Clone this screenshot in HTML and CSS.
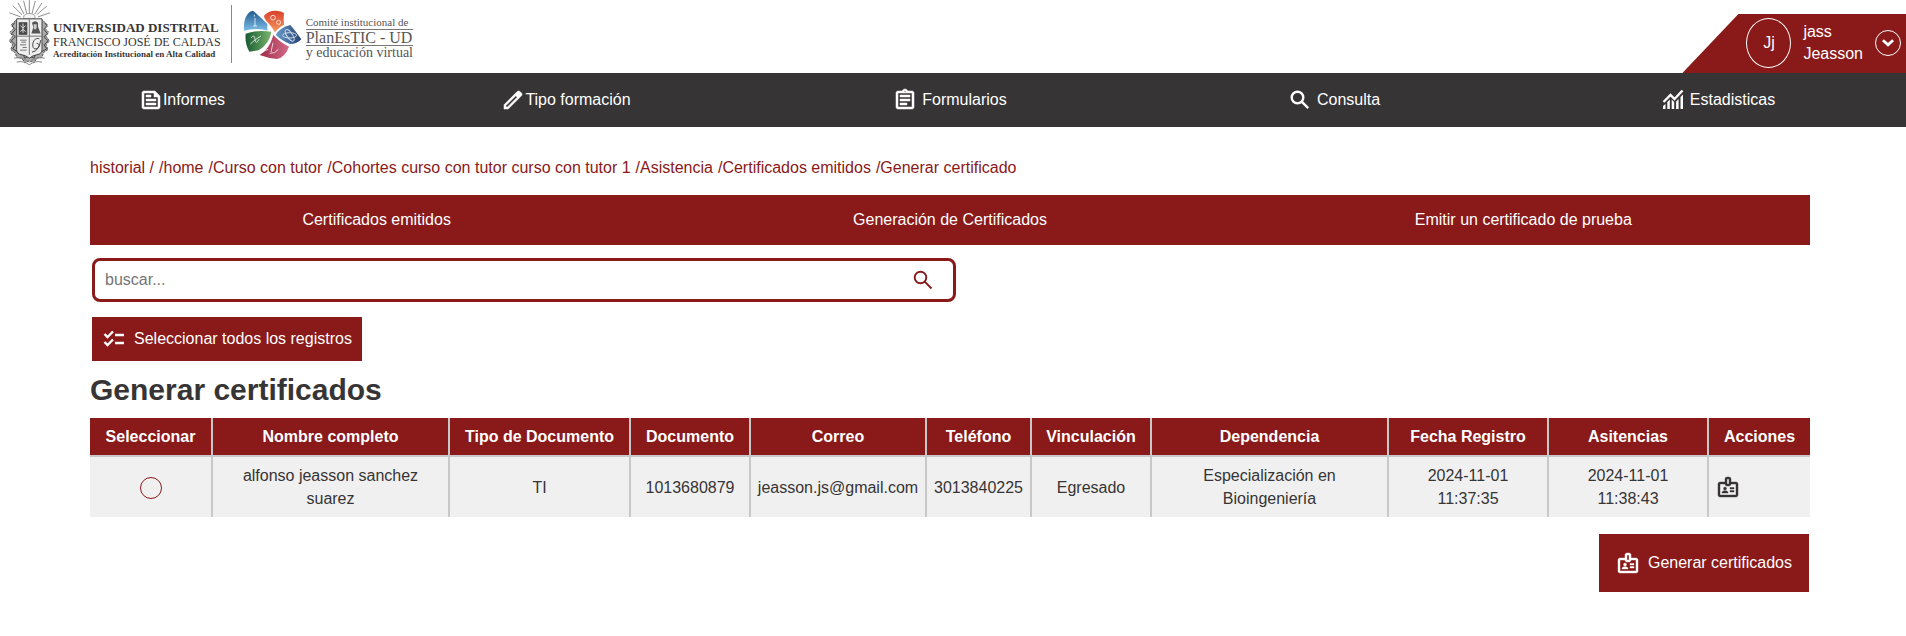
FILE: index.html
```html
<!DOCTYPE html>
<html lang="es">
<head>
<meta charset="utf-8">
<title>Generar certificados</title>
<link rel="stylesheet" href="styles.css">
</head>
<body>
<svg class="sprite" aria-hidden="true">
  <symbol id="badge" viewBox="0 0 24 24"><path fill-rule="evenodd" stroke="currentColor" stroke-width=".4" d="M20 7h-5V4c0-1.100-.9-2-2-2h-2c-1.100 0-2 .9-2 2v3H4c-1.100 0-2 .9-2 2v11c0 1.100.9 2 2 2h16c1.100 0 2-.9 2-2V9c0-1.100-.9-2-2-2zM11 4h2v5h-2V4zm9 16H4V9h5c0 1.100.9 2 2 2h2c1.100 0 2-.9 2-2h5v11zM9 15a1.500 1.500 0 1 0 0-3 1.500 1.500 0 0 0 0 3zm2.080 1.180C10.440 15.900 9.740 15.750 9 15.750s-1.440.15-2.080.43c-.56.24-.92.78-.92 1.390V18h6v-.43c0-.61-.36-1.150-.92-1.390zM14 12.500h4V14h-4zM14 15.500h4V17h-4z"/></symbol>
</svg>

<header class="top">
  <div class="brand">
    <svg class="crest" viewBox="24 0 132 200" aria-hidden="true">
      <g stroke="#555" stroke-width="2" fill="none">
        <path d="M88 40V0M80 40 71 2M72 42 54 8M66 44 38 16M62 50 28 38M96 40l10-38M104 42l22-34M110 44l30-26M114 50l36-12"/>
      </g>
      <path d="M72 56c-4-10 4-16 16-16s20 6 16 16z" fill="#f4f4f4" stroke="#777" stroke-width="2"/>
      <path d="M46 62 34 74l8 10-12 12 8 12-10 14 10 12-6 14 14 10 4 14 16 2 8 14 14-6 14 6 8-14 16-2 4-14 14-10-6-14 10-12-10-14 8-12-12-12 8-10-14-14z" fill="#aaa" stroke="#555" stroke-width="3" stroke-dasharray="7 3"/>
      <path d="M44 68l-8 10 10 10-10 12 10 10-12 12 12 12-8 12 14 8M134 68l8 10-10 10 10 12-10 10 12 12-12 12 8 12-14 8M58 160l12 4 4 10 14-6 14 6 4-10 12-4" fill="none" stroke="#444" stroke-width="3"/>
      <path d="M50 56h76v92q0 14-16 16-12 2-22 10-10-8-22-10-16-2-16-16z" fill="#eee" stroke="#444" stroke-width="3"/>
      <path d="M88 56v108M50 108h76" stroke="#777" stroke-width="3"/>
      <path d="M56 66h26v38H56z" fill="#4a4a4a"/>
      <path d="M69 70v28M61 76l8 8 8-8M61 94l8-6 8 6" fill="none" stroke="#ddd" stroke-width="3"/>
      <path d="M96 68q10-10 18 0v12l8 20H94l6-18z" fill="#555"/>
      <path d="M101 72h9v12l-5 5-4-5z" fill="#ccc"/>
      <path d="M60 120h20M64 126h14M60 134h18M68 142h12M60 150h20" stroke="#777" stroke-width="3"/>
      <path d="M118 116c-22-8-26 34-10 30 12-2 12-18 2-16M96 156q22-4 26-36" fill="none" stroke="#444" stroke-width="3"/>
      <path d="M42 174q22-6 46 12 24-18 46-12M50 186q20-6 38 8 18-14 38-8" fill="none" stroke="#888" stroke-width="3"/>
    </svg>
    <div class="university">
      <span class="uni-name">UNIVERSIDAD DISTRITAL</span>
      <span class="uni-sub">FRANCISCO JOSÉ DE CALDAS</span>
      <span class="uni-note">Acreditación Institucional en Alta Calidad</span>
    </div>
    <svg class="petals" viewBox="36 36 180 156" aria-hidden="true">
      <defs>
        <linearGradient id="pb" x2="0" y2="1"><stop stop-color="#20588f"/><stop offset="1" stop-color="#7bbde6"/></linearGradient>
        <linearGradient id="po" x2="0" y2="1"><stop stop-color="#d9402b"/><stop offset="1" stop-color="#f39a60"/></linearGradient>
        <linearGradient id="pn"><stop stop-color="#66a0cc"/><stop offset="1" stop-color="#263f77"/></linearGradient>
        <linearGradient id="pm"><stop stop-color="#9e2b49"/><stop offset="1" stop-color="#d36c88"/></linearGradient>
        <linearGradient id="pg" x2="1" y2="0"><stop stop-color="#195b32"/><stop offset="1" stop-color="#79b66c"/></linearGradient>
      </defs>
      <path fill="url(#pb)" d="M39 98C37 72 44 42 66 38q16 14 43 40v20Q82 88 39 98z"/>
      <path fill="url(#po)" d="M112 76Q96 60 100 52q12-14 32-14 20 0 27 8-2 16 0 34-14 6-27 23-8-16-20-27z"/>
      <path fill="url(#pn)" d="M134 111q12-22 44-30 14 16 33 43-12 14-34 14-22-8-43-27z"/>
      <path fill="url(#pm)" d="M127 111q20 22 47 35-12 32-36 37-26-2-52-12 30-18 41-60z"/>
      <path fill="url(#pg)" d="M44 107q34-12 77-6-4 34-38 56l-28 4q-14-24-11-54z"/>
      <g fill="none" stroke="#fff" stroke-width="3" opacity=".75">
        <circle cx="126" cy="59" r="7"/><circle cx="143" cy="73" r="6"/>
        <path d="M70 50v6M72 60v24M66 84h12M60 120q10-14 12 4t12 0M58 138q14-14 32-24"/>
        <ellipse cx="176" cy="112" rx="21" ry="8"/><ellipse cx="176" cy="112" rx="8" ry="20" transform="rotate(-35 176 112)"/>
        <path d="M96 160l16-6M126 134l-6 28M116 166q16 2 26-12"/>
      </g>
    </svg>
    <div class="committee">
      <span class="com-small">Comité institucional de</span>
      <span class="com-main">PlanEsTIC - UD</span>
      <span class="com-last">y educación virtual</span>
    </div>
  </div>
  <div class="user">
    <span class="avatar">Jj</span>
    <span class="user-name">jass<br>Jeasson</span>
    <button class="user-toggle" type="button" aria-label="Menú de usuario">
      <svg viewBox="0 0 26 26"><path d="M7.500 10l5.500 5 5.500-5" fill="none" stroke="#fff" stroke-width="3"/></svg>
    </button>
  </div>
</header>

<nav class="nav">
  <a class="nav-item" href="#"><svg class="icon" viewBox="0 0 24 24"><path fill-rule="evenodd" stroke="#fff" stroke-width=".5" d="M16 3H5c-1.100 0-2 .9-2 2v14c0 1.100.9 2 2 2h14c1.100 0 2-.9 2-2V8l-5-5zm3 16H5V5h10v4h4v10zM7 15h10v2H7zM7 7h5v2H7zM7 11h10v2H7z"/></svg>Informes</a>
  <a class="nav-item" href="#"><svg class="icon" viewBox="0 0 24 24"><path d="M3 21v-4.250L16.200 3.575q.3-.275.663-.425T17.625 3t.775.150.65.450L20.425 5q.3.275.438.650T21 6.400q0 .4-.137.763t-.438.662L7.250 21zM5 19h1.400l9.825-9.800-.7-.725-.725-.7L5 17.600z" fill-rule="evenodd" stroke="#fff" stroke-width=".5"/></svg>Tipo formación</a>
  <a class="nav-item spaced" href="#"><svg class="icon" viewBox="0 0 24 24"><path fill-rule="evenodd" stroke="#fff" stroke-width=".5" d="M7 15h7v2H7zM7 11h10v2H7zM7 7h10v2H7zM19 3h-4.180C14.400 1.840 13.300 1 12 1s-2.400.84-2.820 2H5c-1.100 0-2 .9-2 2v14c0 1.100.9 2 2 2h14c1.100 0 2-.9 2-2V5c0-1.100-.9-2-2-2zm-7-.25a.75.75 0 1 1 0 1.500.75.75 0 0 1 0-1.500zM19 19H5V5h14v14z"/></svg>Formularios</a>
  <a class="nav-item spaced" href="#"><svg class="icon" viewBox="0 0 24 24"><path fill="none" stroke="#fff" stroke-width="2.400" d="M15.300 9.500a5.800 5.800 0 1 1-11.600 0 5.800 5.800 0 0 1 11.600 0zM13.700 13.700l6.500 6.500"/></svg>Consulta</a>
  <a class="nav-item spaced" href="#"><svg class="icon" viewBox="0 0 24 24"><path fill="none" stroke="#fff" stroke-width="2.400" d="M2.500 14l7-7 4 4 8-8.500"/><path d="M2 18l2.500-2V21H2zM6.300 14l2.500-2.500V21H6.300zM10.700 11.500l2.500 2.500v7h-2.500zM15.100 13.500l2.500-2.500v10h-2.500zM19.500 9L22 6.500V21h-2.500z"/></svg>Estadisticas</a>
</nav>

<main class="page">
  <nav class="crumbs" aria-label="historial">
    <span>historial /</span>
    <a href="#">/home</a>
    <a href="#">/Curso con tutor</a>
    <a href="#">/Cohortes curso con tutor curso con tutor 1</a>
    <a href="#">/Asistencia</a>
    <a href="#">/Certificados emitidos</a>
    <a href="#">/Generar certificado</a>
  </nav>

  <nav class="tabs">
    <a href="#">Certificados emitidos</a>
    <a href="#">Generación de Certificados</a>
    <a href="#">Emitir un certificado de prueba</a>
  </nav>

  <form class="search">
    <input class="search-input" type="text" placeholder="buscar..." aria-label="buscar">
    <button class="search-button" type="button" aria-label="Buscar">
      <svg class="icon" viewBox="0 0 24 24"><path fill="none" stroke="#8a1919" stroke-width="1.900" d="M15.300 9.500a5.800 5.800 0 1 1-11.600 0 5.800 5.800 0 0 1 11.600 0zM13.700 13.700l6.800 6.800"/></svg>
    </button>
  </form>

  <button class="button select-all" type="button">
    <svg class="icon" viewBox="0 0 24 24"><path fill="none" stroke="#fff" stroke-width="2.400" d="M2.500 7l3 3L11 4.500M2.500 15l3 3L11 12.500M13 8h9M13 16h9"/></svg>
    Seleccionar todos los registros
  </button>

  <h1 class="title">Generar certificados</h1>

  <table class="records">
    <colgroup>
      <col class="c-select"><col class="c-wide"><col class="c-type"><col class="c-short"><col class="c-mail"><col class="c-phone"><col class="c-short"><col class="c-wide"><col class="c-date"><col class="c-date"><col class="c-actions">
    </colgroup>
    <thead>
      <tr><th>Seleccionar</th><th>Nombre completo</th><th>Tipo de Documento</th><th>Documento</th><th>Correo</th><th>Teléfono</th><th>Vinculación</th><th>Dependencia</th><th>Fecha Registro</th><th>Asitencias</th><th>Acciones</th></tr>
    </thead>
    <tbody>
      <tr>
        <td><input class="pick" type="radio" name="registro" aria-label="Seleccionar alfonso jeasson sanchez suarez"></td>
        <td class="roomy">alfonso jeasson sanchez suarez</td>
        <td>TI</td>
        <td>1013680879</td>
        <td>jeasson.js@gmail.com</td>
        <td>3013840225</td>
        <td>Egresado</td>
        <td class="roomy">Especialización en Bioingeniería</td>
        <td class="roomy">2024-11-01 11:37:35</td>
        <td class="roomy">2024-11-01 11:38:43</td>
        <td class="actions"><button class="row-action" type="button" aria-label="Generar certificado"><svg class="icon"><use href="#badge"/></svg></button></td>
      </tr>
    </tbody>
  </table>

  <button class="button generate" type="button">
    <svg class="icon"><use href="#badge"/></svg>
    Generar certificados
  </button>
</main>
</body>
</html>
```
FILE: styles.css
```css
* { box-sizing: border-box; }

body {
  margin: 0;
  background: #fff;
  color: #373435;
  font-family: "Liberation Sans", Arial, sans-serif;
  font-size: 16px;
  line-height: 23px;
}

a { color: inherit; text-decoration: none; }

button {
  border: 0;
  padding: 0;
  background: none;
  color: inherit;
  font: inherit;
  cursor: pointer;
}

.sprite { position: absolute; width: 0; height: 0; }

.icon {
  width: 24px;
  height: 24px;
  flex: none;
  fill: currentColor;
}

.top {
  display: flex;
  justify-content: space-between;
  align-items: flex-end;
  height: 73px;
}

.brand {
  display: flex;
  align-items: center;
  align-self: flex-start;
  padding-left: 8px;
  font-family: "Liberation Serif", serif;
  white-space: nowrap;
}

.crest { width: 44px; height: 67px; }

.university {
  display: flex;
  flex-direction: column;
  height: 58px;
  padding: 16px 10px 0 1px;
  border-right: 1px solid #888;
}

.uni-name { font-size: 13px; font-weight: bold; line-height: 14px; }
.uni-sub { font-size: 12px; line-height: 14px; }
.uni-note { font-size: 9px; font-weight: bold; line-height: 11px; }

.petals { width: 60px; height: 52px; margin: 5px 3px 0 11px; }

.committee {
  display: flex;
  flex-direction: column;
  padding-top: 8px;
  color: #555;
}

.com-small { font-size: 11px; line-height: 14px; }
.com-main {
  border: solid #777;
  border-width: 1px 0;
  font-size: 16px;
  line-height: 15px;
}
.com-last { font-size: 14px; line-height: 14px; }

.user {
  display: flex;
  align-items: center;
  gap: 12px;
  height: 59px;
  padding: 0 5px 1px 64px;
  background: #8a1919;
  color: #fff;
  line-height: 22px;
  clip-path: polygon(56px 0, 100% 0, 100% 100%, 0 100%);
}

.avatar {
  display: grid;
  place-items: center;
  width: 45px;
  height: 50px;
  border: 1px solid #fff;
  border-radius: 50%;
}

.user-toggle {
  width: 26px;
  height: 26px;
  border: 1px solid #fff;
  border-radius: 50%;
}

.user-toggle svg { display: block; width: 24px; height: 24px; }

.nav {
  display: grid;
  grid-template-columns: repeat(5, 1fr);
  gap: 20px;
  padding-right: 6px;
  background: #373435;
  color: #fff;
}

.nav-item {
  display: flex;
  align-items: center;
  justify-content: center;
  height: 54px;
  line-height: 22px;
}

.nav-item.spaced { gap: 5px; }

.page {
  display: flex;
  flex-direction: column;
  align-items: flex-start;
  padding: 29px 96px 44px 90px;
}

.crumbs {
  display: flex;
  gap: 5px;
  margin-bottom: 16px;
  color: #8a1919;
}

.tabs {
  display: grid;
  grid-template-columns: repeat(3, 1fr);
  width: 100%;
  margin-bottom: 13px;
  background: #8a1919;
  color: #fff;
  text-align: center;
  line-height: 50px;
}

.search {
  display: flex;
  align-items: center;
  width: 864px;
  max-width: 100%;
  height: 44px;
  margin: 0 2px 15px;
  border: 3px solid #8a1919;
  border-radius: 8px;
}

.search-input {
  flex: 1;
  min-width: 0;
  padding: 0 10px;
  border: 0;
  outline: 0;
  background: none;
  color: inherit;
  font: inherit;
  line-height: 22px;
}

.search-input::placeholder { color: #757575; }

.search-button { display: flex; padding: 0 18px; }

.button {
  display: flex;
  align-items: center;
  gap: 8px;
  background: #8a1919;
  color: #fff;
  line-height: 22px;
}

.select-all { height: 44px; margin: 0 2px 12px; padding: 0 10px; }

.title {
  margin: 0 0 11px;
  font-size: 30px;
  line-height: 34px;
}

.records {
  width: 100%;
  table-layout: fixed;
  border-collapse: collapse;
  border-style: hidden;
  text-align: center;
}

.c-select { width: 122px; }
.c-wide { width: 237px; }
.c-type { width: 181px; }
.c-short { width: 120px; }
.c-mail { width: 176px; }
.c-phone { width: 105px; }
.c-date { width: 160px; }
.c-actions { width: 102px; }

.records th,
.records td {
  border: 2px solid #c8c8c8;
}

.records th {
  padding: 7px 0;
  background: #8a1919;
  color: #fff;
}

.records td {
  padding: 7px 4px;
  background: #f0f0f0;
}

.records .roomy { padding: 7px 24px; }
.records .actions { padding-left: 7px; text-align: left; }

.pick {
  appearance: none;
  width: 22px;
  height: 22px;
  margin: 2px 0 0;
  border: 1px solid #8a1919;
  border-radius: 50%;
  vertical-align: middle;
}

.row-action { display: flex; }

.generate {
  align-self: flex-end;
  height: 58px;
  margin: 17px 1px 0;
  padding: 0 17px;
}
```
